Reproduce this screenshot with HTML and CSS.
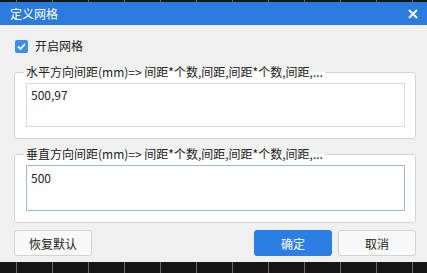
FILE: index.html
```html
<!DOCTYPE html>
<html lang="zh-CN">
<head>
    <meta charset="UTF-8">
    <meta name="viewport" content="width=device-width, initial-scale=1.0">
    <title>定义网格</title>
    <link rel="stylesheet" href="styles.css">
</head>
<body>
    <div class="ruler ruler-top"></div>
    <div class="dialog">
        <div class="title-bar">
            <span class="title">定义网格</span>
            <span class="close">
                <svg width="10" height="10" viewBox="0 0 10 10">
                    <path d="M1 1 L9 9 M9 1 L1 9" stroke="#fff" stroke-width="2" fill="none"/>
                </svg>
            </span>
        </div>
        <div class="dialog-body">
            <label class="check-row">
                <span class="check-box">
                    <svg width="13" height="13" viewBox="0 0 13 13">
                        <path d="M3 6.5 L5.5 9 L10 4" stroke="#fff" stroke-width="1.8" fill="none"/>
                    </svg>
                </span>开启网格
            </label>

            <!-- 水平方向 -->
            <fieldset class="group">
                <legend>水平方向间距(mm)=&gt; 间距*个数,间距,间距*个数,间距,...</legend>
                <textarea class="spacing-input">500,97</textarea>
            </fieldset>

            <!-- 垂直方向 -->
            <fieldset class="group">
                <legend>垂直方向间距(mm)=&gt; 间距*个数,间距,间距*个数,间距,...</legend>
                <textarea class="spacing-input focused">500</textarea>
            </fieldset>

            <div class="button-row">
                <button class="btn">恢复默认</button>
                <span class="spacer"></span>
                <button class="btn btn-primary">确定</button>
                <button class="btn">取消</button>
            </div>
        </div>
    </div>
    <div class="ruler ruler-bottom"></div>
</body>
</html>
```

FILE: styles.css
```css
body {
    margin: 0;
    background-color: #161616;
    font-family: "Noto Sans CJK SC", "Noto Sans", sans-serif;
    font-size: 12px;
    color: #222;
}

/* 背景刻度 */
.ruler {
    background: repeating-linear-gradient(to right, transparent 0 16px, #6a6a6a 16px 17px, transparent 17px 36px);
}
.ruler-top {
    height: 2px;
}
.ruler-bottom {
    height: 11px;
}

.dialog {
    background-color: #f0f0f0;
    height: 260px;
    display: flex;
    flex-direction: column;
}
.title-bar {
    background-color: #2b7bdf;
    color: #fff;
    height: 26px;
    display: flex;
    align-items: center;
    justify-content: space-between;
    padding: 0 9px 0 10px;
}
.title {
    line-height: 16px;
}
.close {
    display: flex;
    width: 10px;
    height: 10px;
}

.dialog-body {
    flex: 1;
    display: flex;
    flex-direction: column;
    padding: 13px 11px 6px 14px;
}
.check-row {
    display: flex;
    align-items: center;
    height: 16px;
    line-height: 16px;
    padding-left: 1px;
    margin-bottom: 10px;
}
.check-box {
    width: 13px;
    height: 13px;
    border-radius: 2px;
    background-color: #3d8fe6;
    display: flex;
    margin-right: 7px;
}

.group {
    margin: 0 0 7px 0;
    padding: 3px 10px 11px 11px;
    border: 1px solid #d4d4d4;
    border-radius: 3px;
    background-color: #fff;
    min-width: 0;
}
.group legend {
    padding: 0 2px;
    margin-left: -2px;
    line-height: 16px;
}
.spacing-input {
    display: block;
    width: 100%;
    box-sizing: border-box;
    height: 44px;
    resize: none;
    border: 1px solid #d9d9d9;
    padding: 3px 4px;
    font-family: inherit;
    font-size: 12px;
    line-height: 16px;
    color: #222;
    background-color: #fff;
    outline: none;
}
.spacing-input.focused {
    height: 46px;
    border-color: #9fbad2;
    padding-top: 4px;
}

.button-row {
    display: flex;
    gap: 6px;
    margin-top: auto;
}
.spacer {
    flex: 1;
}
.btn {
    width: 78px;
    height: 26px;
    border: 1px solid #d2d2d2;
    border-radius: 3px;
    background-color: #f9f9f9;
    font-family: inherit;
    font-size: 12px;
    color: #222;
    padding: 0;
}
.btn-primary {
    background-color: #2c7ee2;
    border-color: #2c7ee2;
    color: #fff;
}
```
